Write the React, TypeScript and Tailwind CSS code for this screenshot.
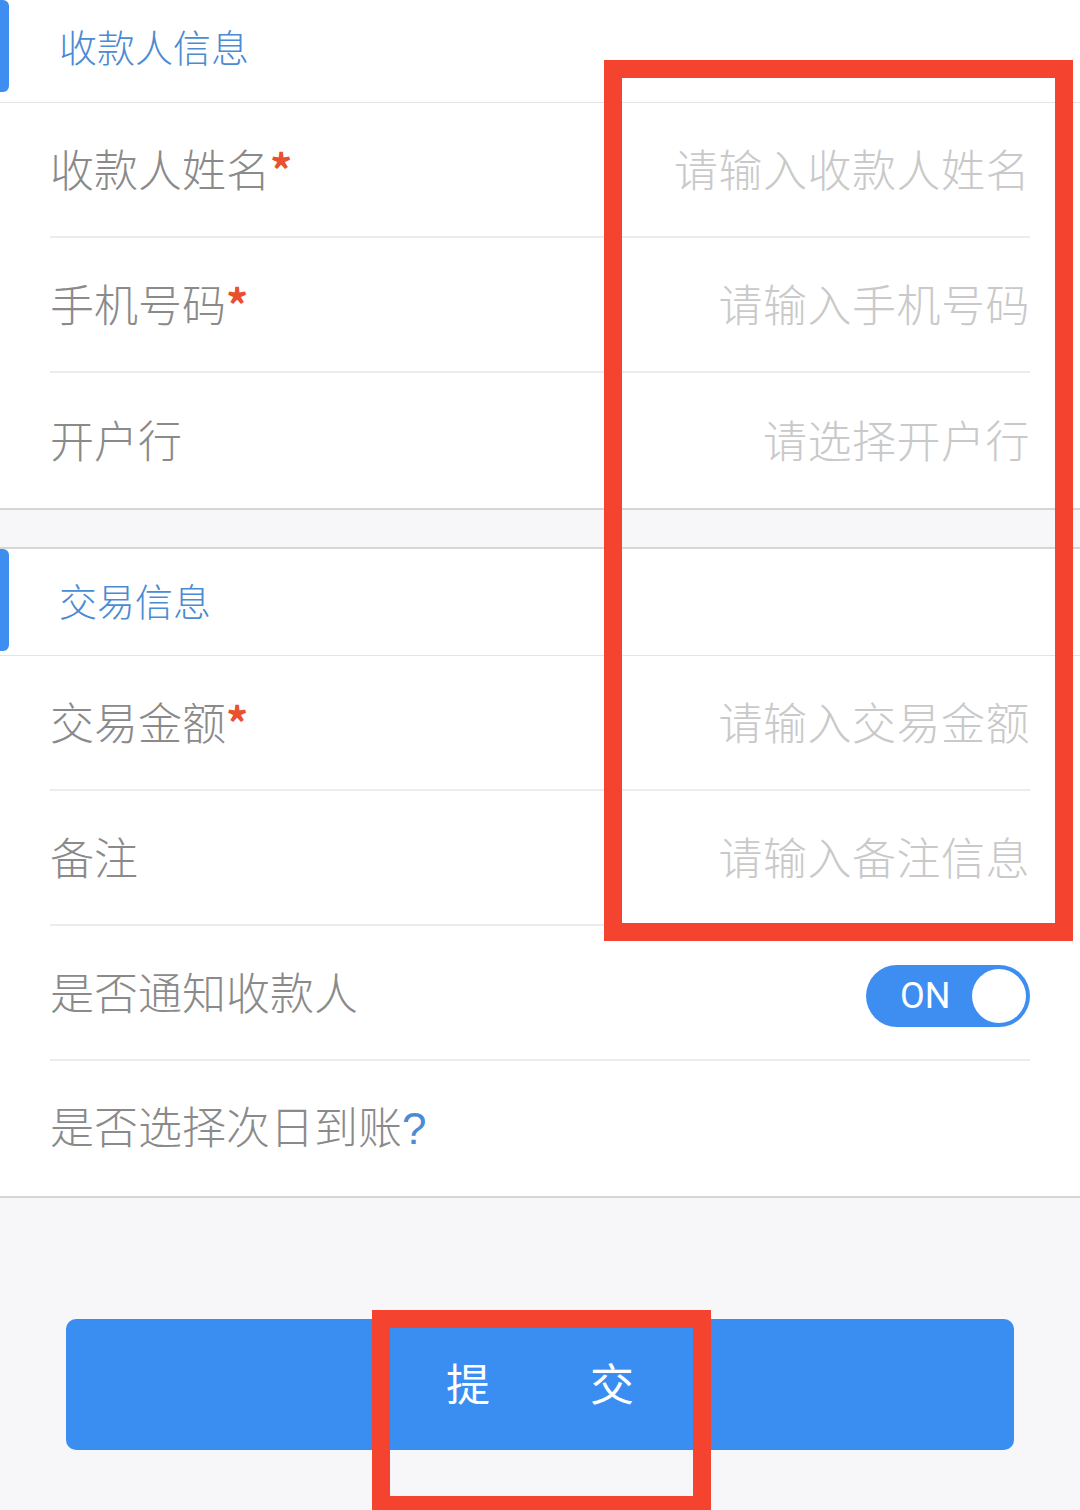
import React from 'react'

const font = { fontFamily: '"Noto Sans CJK SC", "Noto Sans", sans-serif' }

function SectionHeader({ title, className }: { title: string; className: string }) {
  return (
    <div className={`flex items-stretch border-b border-[#e4e4e6] ${className}`}>
      <div className="w-[9px] rounded-r-[6px] bg-[#3d8ef0]" />
      <div className="flex items-center pl-[50px] text-[38px] leading-none font-light text-[#4a8bd2]">{title}</div>
    </div>
  )
}

function Row({
  label,
  required,
  placeholder,
  last,
  children,
}: {
  label: React.ReactNode
  required?: boolean
  placeholder?: string
  last?: boolean
  children?: React.ReactNode
}) {
  return (
    <div className={`mx-[50px] flex h-[135px] items-center justify-between pb-[3px] ${last ? '' : 'border-b-2 border-[#ececee]'}`}>
      <div className="text-[44px] leading-none font-light text-[#8a8a8a]">
        {label}
        {required && <span className="font-bold text-[#e9502f]">*</span>}
      </div>
      {placeholder && <div className="text-[44px] leading-none font-light tracking-[0.5px] text-[#c9c9c9]">{placeholder}</div>}
      {children}
    </div>
  )
}

export default function App() {
  return (
    <div className="relative h-[1510px] w-[1080px] overflow-hidden bg-[#f7f7f9]" style={font}>
      {/* 收款人信息 */}
      <div className="border-b-2 border-[#d6d6d8] bg-white">
        <SectionHeader title="收款人信息" className="h-[103px] pb-[10px]" />
        <Row label="收款人姓名" required placeholder="请输入收款人姓名" />
        <Row label="手机号码" required placeholder="请输入手机号码" />
        <Row label="开户行" placeholder="请选择开户行" last />
      </div>

      {/* 交易信息 */}
      <div className="mt-[37px] border-y-2 border-[#d6d6d8] bg-white">
        <SectionHeader title="交易信息" className="h-[107px] pb-[4px]" />
        <Row label="交易金额" required placeholder="请输入交易金额" />
        <Row label="备注" placeholder="请输入备注信息" />
        <Row label="是否通知收款人">
          <div className="mt-[9px] flex h-[62px] w-[164px] items-center justify-between rounded-full bg-[#3d8ef0] pl-[34px] pr-[4px]">
            <span className="text-[36px] leading-none text-white" style={{ fontFamily: 'Roboto, "Noto Sans", sans-serif' }}>
              ON
            </span>
            <span className="h-[54px] w-[54px] rounded-full bg-white" />
          </div>
        </Row>
        <Row
          label={
            <>
              是否选择次日到账
              <span className="text-[#4a8bd2]" style={{ fontFamily: '"Liberation Sans", sans-serif' }}>
                ?
              </span>
            </>
          }
          last
        />
      </div>

      {/* 提交 */}
      <div className="mx-[66px] mt-[121px] flex h-[131px] items-center justify-center gap-[100px] rounded-[10px] bg-[#3a8ef2] pb-[6px] text-[44px] leading-none text-white">
        <span>提</span>
        <span>交</span>
      </div>

      {/* annotation boxes */}
      <div className="absolute left-[604px] top-[60px] h-[881px] w-[469px] border-[18px] border-[#f4432f]" />
      <div className="absolute left-[372px] top-[1310px] h-[204px] w-[339px] border-[18px] border-[#f4432f]" />
    </div>
  )
}
